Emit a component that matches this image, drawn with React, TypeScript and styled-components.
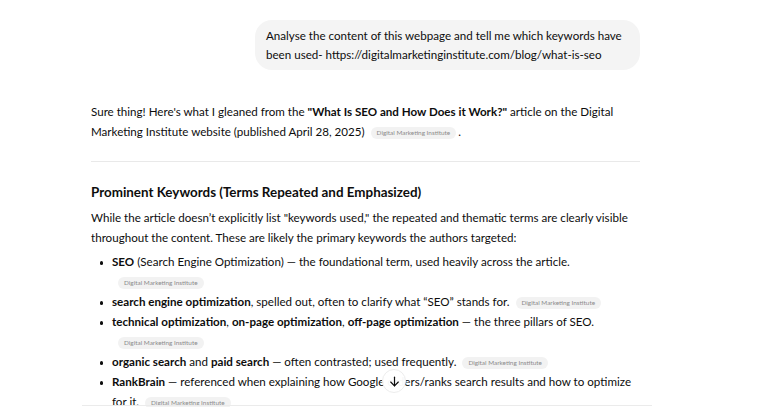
import React from "react";
import styled, { createGlobalStyle } from "styled-components";

const Global = createGlobalStyle`
  html, body {
    margin: 0;
    padding: 0;
    background: #ffffff;
    overflow: hidden;
  }
  body {
    font-family: Lato, "Noto Sans", sans-serif;
    color: #0d0d0d;
    -webkit-font-smoothing: antialiased;
  }
`;

const Page = styled.div`
  position: relative;
  width: 780px;
  height: 407px;
  overflow: hidden;
  padding-top: 20px;
  box-sizing: border-box;
`;

const Column = styled.div`
  width: 549px;
  margin-left: 91px;
  display: flex;
  flex-direction: column;
`;

const UserRow = styled.div`
  display: flex;
  justify-content: flex-end;
`;

const UserBubble = styled.div`
  max-width: 385px;
  box-sizing: border-box;
  background: #f4f4f4;
  border-radius: 17px;
  padding: 6px 12px 6px 11px;
  font-size: 11.6px;
  line-height: 19px;
`;

const Answer = styled.div`
  margin-top: 32px;
  display: flex;
  flex-direction: column;
`;

const Para = styled.p<{ $mb?: number }>`
  margin: 0 0 ${(p) => p.$mb ?? 0}px 0;
  font-size: 11.6px;
  line-height: 20px;
`;

const Strong = styled.strong`
  font-weight: 700;
`;

const Chip = styled.span`
  display: inline-flex;
  align-items: center;
  height: 12px;
  padding: 0 6px;
  margin: 0 2px 0 6px;
  border-radius: 6px;
  background: #f2f2f2;
  color: #8a8a8a;
  font-size: 6.4px;
  line-height: 12px;
  vertical-align: 1px;
  white-space: nowrap;
`;

const Divider = styled.hr`
  margin: 19px 0 0 0;
  border: none;
  height: 1px;
  background: #e9e9e9;
`;

const Heading = styled.h3`
  margin: 19px 0 5px 0;
  font-size: 13.4px;
  line-height: 22px;
  font-weight: 700;
`;

const List = styled.ul`
  list-style: none;
  margin: 0;
  padding: 0;
  display: flex;
  flex-direction: column;
`;

const Item = styled.li`
  display: grid;
  grid-template-columns: 21px 1fr;
  font-size: 11.6px;
  line-height: 20px;
`;

const Bullet = styled.span`
  display: flex;
  justify-content: center;
  padding-top: 9px;
  &::before {
    content: "";
    width: 3.5px;
    height: 3.5px;
    border-radius: 50%;
    background: #0d0d0d;
  }
`;

const ScrollButton = styled.button`
  position: absolute;
  left: 382px;
  top: 369px;
  width: 24px;
  height: 24px;
  border-radius: 50%;
  border: 1px solid #ededed;
  background: rgba(255, 255, 255, 0.96);
  display: flex;
  align-items: center;
  justify-content: center;
  padding: 0;
`;

const ComposerEdge = styled.div`
  position: absolute;
  left: 82px;
  right: 128px;
  bottom: 1px;
  height: 1px;
  background: #ebebeb;
`;

const DownArrow = () => (
  <svg width="13" height="13" viewBox="0 0 24 24" fill="none" stroke="#0d0d0d" strokeWidth="2.2" strokeLinecap="round" strokeLinejoin="round">
    <path d="M12 4v16" />
    <path d="M5 13l7 7 7-7" />
  </svg>
);

const items: React.ReactNode[] = [
  <>
    <Strong>SEO</Strong> (Search Engine Optimization) — the foundational term, used heavily across the article.<Chip>Digital Marketing Institute</Chip>
  </>,
  <>
    <Strong>search engine optimization</Strong>, spelled out, often to clarify what “SEO” stands for.<Chip>Digital Marketing Institute</Chip>
  </>,
  <>
    <Strong>technical optimization</Strong>, <Strong>on-page optimization</Strong>, <Strong>off-page optimization</Strong> — the three pillars of SEO.<Chip>Digital Marketing Institute</Chip>
  </>,
  <>
    <Strong>organic search</Strong> and <Strong>paid search</Strong> — often contrasted; used frequently.<Chip>Digital Marketing Institute</Chip>
  </>,
  <>
    <Strong>RankBrain</Strong> — referenced when explaining how Google orders/ranks search results and how to optimize for it.<Chip>Digital Marketing Institute</Chip>
  </>,
];

export default function App() {
  return (
    <>
      <Global />
      <Page>
        <Column>
          <UserRow>
            <UserBubble>
              Analyse the content of this webpage and tell me which keywords have been used- https://digitalmarketinginstitute.com/blog/what-is-seo
            </UserBubble>
          </UserRow>
          <Answer>
            <Para>
              Sure thing! Here's what I gleaned from the <Strong>"What Is SEO and How Does it Work?"</Strong> article on the Digital Marketing Institute website (published April 28, 2025)<Chip>Digital Marketing Institute</Chip>.
            </Para>
            <Divider />
            <Heading>Prominent Keywords (Terms Repeated and Emphasized)</Heading>
            <Para $mb={4}>
              While the article doesn’t explicitly list "keywords used," the repeated and thematic terms are clearly visible throughout the content. These are likely the primary keywords the authors targeted:
            </Para>
            <List>
              {items.map((content, i) => (
                <Item key={i}>
                  <Bullet />
                  <span>{content}</span>
                </Item>
              ))}
            </List>
          </Answer>
        </Column>
        <ScrollButton aria-label="Scroll down">
          <DownArrow />
        </ScrollButton>
        <ComposerEdge />
      </Page>
    </>
  );
}
